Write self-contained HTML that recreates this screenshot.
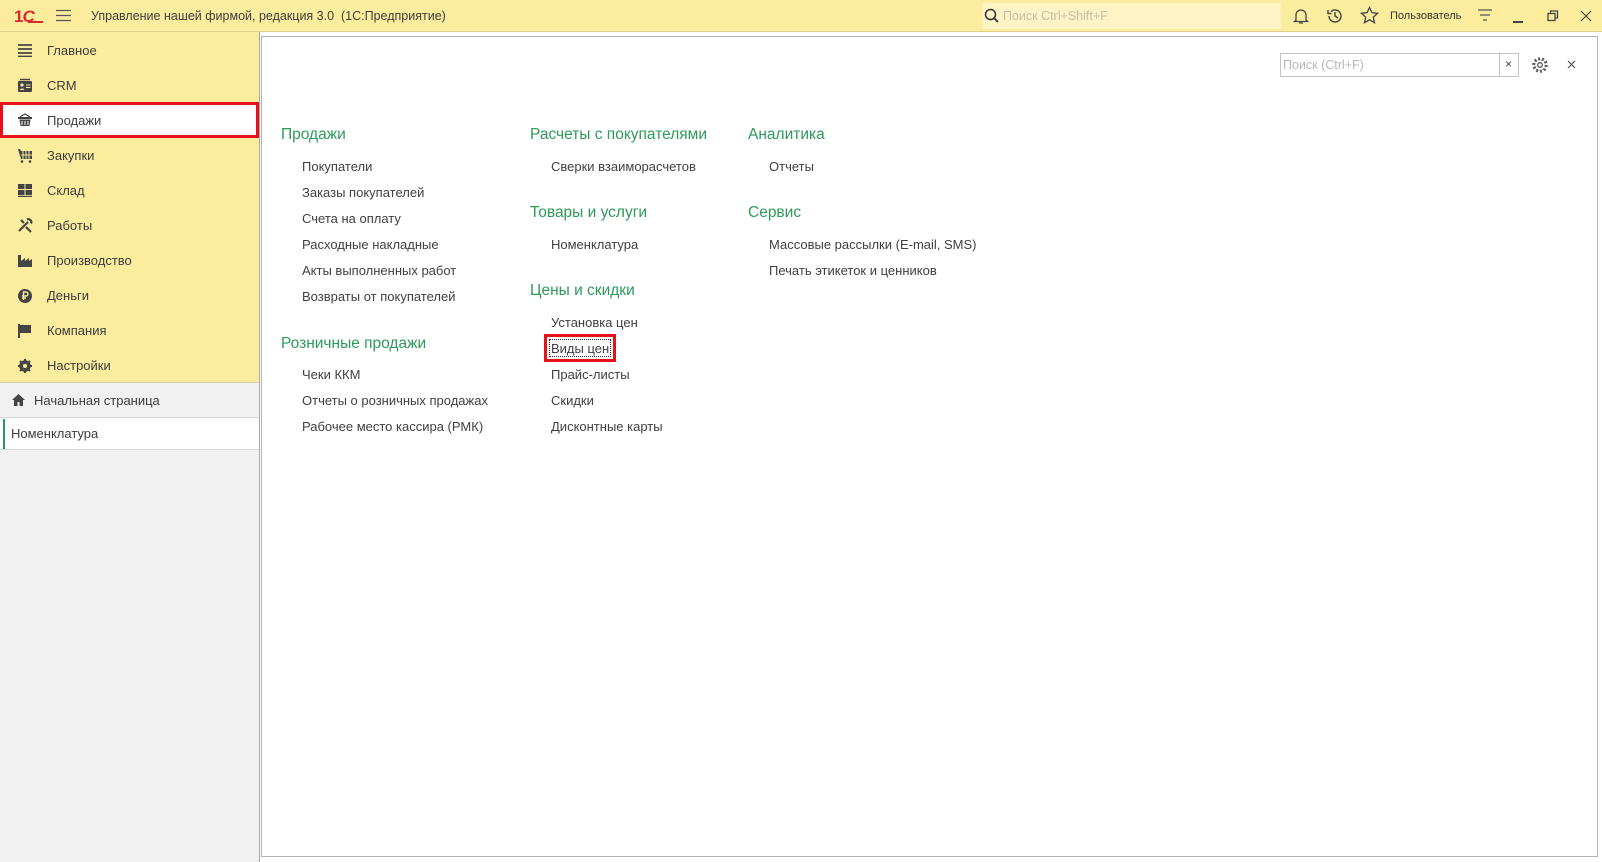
<!DOCTYPE html>
<html><head><meta charset="utf-8"><style>
*{margin:0;padding:0;box-sizing:border-box}
body{width:1602px;height:862px;overflow:hidden;background:#fff;font-family:"Liberation Sans",Arial,sans-serif;color:#4a4a4a;position:relative}
.a{position:absolute;white-space:nowrap}
#top{left:0;top:0;width:1602px;height:32px;background:#fbec9e;border-bottom:1px solid #e0d08a}
#side{left:0;top:32px;width:260px;height:830px;background:#f2f1f2;border-right:1px solid #a8a8a8}
#yel{left:0;top:32px;width:259px;height:351px;background:#fbec9e;border-bottom:1px solid #d8d0a8}
.mi{font-size:13px;color:#3c3c3c}
.ic{width:16px;height:14px;position:absolute}
#panel{left:261px;top:36px;width:1337px;height:821px;border:1px solid #b4b4b4;border-right:1px solid #b4b4b4;background:#fff}
.h{font-size:15.5px;color:#2e9a5a}
.l{font-size:13px;color:#404040}
</style></head><body>
<div class="a" id="top"></div>
<div class="a" style="left:14px;top:7px;font-size:17px;font-weight:bold;color:#d92b2b;letter-spacing:-1px">1<span style="font-style:italic">С</span></div>
<div class="a" style="left:28px;top:21px;width:15px;height:2px;background:#d92b2b"></div>
<svg class="a" style="left:56px;top:9px" width="15" height="13"><path d="M0 1.5H15M0 6.5H15M0 11.5H15" stroke="#555" stroke-width="1.3"/></svg>
<div class="a" style="left:91px;top:9px;font-size:12.5px;color:#3e3e3e">Управление нашей фирмой, редакция 3.0 &nbsp;(1С:Предприятие)</div>
<div class="a" style="left:982px;top:3px;width:299px;height:26px;background:#fdf3c4"></div>
<svg class="a" style="left:984px;top:8px" width="16" height="16"><circle cx="6.5" cy="6.5" r="5" fill="none" stroke="#333" stroke-width="1.5"/><path d="M10 10L14 14" stroke="#333" stroke-width="1.8"/></svg>
<div class="a" style="left:1003px;top:9px;font-size:12.5px;color:#c4c0a8">Поиск Ctrl+Shift+F</div>
<svg class="a" style="left:1292px;top:7px" width="18" height="18"><path d="M4 13V8a5 5 0 0 1 10 0v5l1.5 1.5h-13Z M7 16h4" fill="none" stroke="#444" stroke-width="1.3"/></svg>
<svg class="a" style="left:1326px;top:7px" width="18" height="18"><path d="M3 9a6 6 0 1 0 2-4.5M2 3v3.5h3.5M9 5v4l3 2" fill="none" stroke="#444" stroke-width="1.4"/></svg>
<svg class="a" style="left:1360px;top:6px" width="19" height="19"><path d="M9.5 1.5l2.4 5.2 5.6.6-4.2 3.8 1.2 5.6-5-2.9-5 2.9 1.2-5.6L1.5 7.3l5.6-.6Z" fill="none" stroke="#444" stroke-width="1.3"/></svg>
<div class="a" style="left:1390px;top:10px;font-size:11px;color:#333">Пользователь</div>
<svg class="a" style="left:1477px;top:8px" width="16" height="16"><path d="M1 2H15M3 7H13M6 12H10" stroke="#555" stroke-width="1.3"/></svg>
<div class="a" style="left:1513px;top:21px;width:10px;height:1.5px;background:#444"></div>
<svg class="a" style="left:1547px;top:10px" width="12" height="12"><path d="M1 3.5h7v7h-7zM3.5 3.5V1h7v7H8" fill="none" stroke="#444" stroke-width="1.3"/></svg>
<svg class="a" style="left:1580px;top:10px" width="12" height="12"><path d="M1 1L11 11M11 1L1 11" stroke="#444" stroke-width="1.2"/></svg>

<div class="a" id="side"></div>
<div class="a" id="yel"></div>
<div class="a" style="left:0;top:102px;width:259px;height:36px;background:#fff;border:3px solid #e8101a"></div>

<svg class="a" style="left:17px;top:43px" width="16" height="14"><path d="M1 2H15M1 6H15M1 10H15M1 13.5H15" stroke="#444" stroke-width="1.8"/></svg>
<div class="a mi" style="left:47px;top:43px">Главное</div>
<svg class="a" style="left:17px;top:78px" width="16" height="15"><rect x="1" y="3" width="14" height="11" rx="1" fill="#444"/><path d="M3 1.5h10" stroke="#444" stroke-width="1.5"/><circle cx="5" cy="7" r="1.6" fill="#fbec9e"/><path d="M2.8 12c0-2 4.4-2 4.4 0z" fill="#fbec9e"/><path d="M9 7h4.5M9 9.5h4.5" stroke="#fbec9e"/></svg>
<div class="a mi" style="left:47px;top:78px">CRM</div>
<svg class="a" style="left:17px;top:113px" width="16" height="14"><path d="M3 4L8 1l5 3" fill="none" stroke="#444" stroke-width="1.2"/><rect x="1" y="4" width="14" height="2" fill="#444"/><path d="M2.5 6.5h11l-1 6.5h-9z" fill="#444"/><path d="M5 8v4M8 8v4M11 8v4" stroke="#fff"/></svg>
<div class="a mi" style="left:47px;top:113px">Продажи</div>
<svg class="a" style="left:17px;top:148px" width="16" height="15"><path d="M1 1h2l1 2h11v8H4z" fill="#444"/><path d="M6 3v8M9 3v8M12 3v8M4 7h11" stroke="#fbec9e"/><circle cx="5" cy="13.5" r="1.3" fill="#444"/><circle cx="13" cy="13.5" r="1.3" fill="#444"/></svg>
<div class="a mi" style="left:47px;top:148px">Закупки</div>
<svg class="a" style="left:17px;top:183px" width="16" height="14"><rect x="1" y="1" width="6.5" height="5" fill="#444"/><rect x="8.5" y="1" width="6.5" height="5" fill="#444"/><rect x="1" y="7" width="6.5" height="5" fill="#444"/><rect x="8.5" y="7" width="6.5" height="5" fill="#444"/><rect x="1" y="12.8" width="14" height="1.2" fill="#444"/></svg>
<div class="a mi" style="left:47px;top:183px">Склад</div>
<svg class="a" style="left:17px;top:218px" width="16" height="15"><path d="M2 13L11 4M4 2l3 3M10 1.5a3 3 0 0 1 4 4M9 9l5 5" stroke="#444" stroke-width="2.2" fill="none"/></svg>
<div class="a mi" style="left:47px;top:218px">Работы</div>
<svg class="a" style="left:17px;top:253px" width="16" height="14"><path d="M1 14V2h3v6l4-3v3l4-3v3l3-2v8z" fill="#444"/></svg>
<div class="a mi" style="left:47px;top:253px">Производство</div>
<svg class="a" style="left:17px;top:288px" width="16" height="16"><circle cx="8" cy="8" r="7" fill="#444"/><path d="M6.5 12V4h2.5a2 2 0 0 1 0 4H5M5 10h4" stroke="#fbec9e" stroke-width="1.4" fill="none"/></svg>
<div class="a mi" style="left:47px;top:288px">Деньги</div>
<svg class="a" style="left:17px;top:323px" width="16" height="15"><path d="M2 1v14" stroke="#444" stroke-width="2"/><path d="M3 2h11v8H3z" fill="#444"/></svg>
<div class="a mi" style="left:47px;top:323px">Компания</div>
<svg class="a" style="left:17px;top:358px" width="16" height="16"><circle cx="8" cy="8" r="4.5" fill="none" stroke="#444" stroke-width="2.5"/><path d="M8 1v14M1 8h14M3 3l10 10M13 3L3 13" stroke="#444" stroke-width="2"/><circle cx="8" cy="8" r="2" fill="#fbec9e"/></svg>
<div class="a mi" style="left:47px;top:358px">Настройки</div>

<div class="a" style="left:0;top:417px;width:259px;height:1px;background:#d8d8d8"></div>
<svg class="a" style="left:11px;top:393px" width="15" height="14"><path d="M7.5 1L1 7h2v6h3.5V9h2v4H12V7h2z" fill="#444"/></svg>
<div class="a mi" style="left:34px;top:393px">Начальная страница</div>
<div class="a" style="left:0;top:418px;width:259px;height:32px;background:#fff;border-bottom:1px solid #d8d8d8"></div>
<div class="a" style="left:3px;top:419px;width:2px;height:30px;background:#2a9a5a"></div>
<div class="a mi" style="left:11px;top:426px">Номенклатура</div>

<div class="a" id="panel"></div>
<div class="a" style="left:1280px;top:53px;width:239px;height:24px;border:1px solid #c4c4c4"></div>
<div class="a" style="left:1499px;top:53px;width:1px;height:24px;background:#c4c4c4"></div>
<div class="a" style="left:1283px;top:58px;font-size:12.5px;color:#b8b8b8">Поиск (Ctrl+F)</div>
<div class="a" style="left:1505px;top:57px;font-size:12px;color:#444">×</div>
<svg class="a" style="left:1531px;top:56px" width="18" height="18"><circle cx="9" cy="9" r="5.5" fill="none" stroke="#555" stroke-width="1.4" stroke-dasharray="2.2 1.2"/><circle cx="9" cy="9" r="2.3" fill="none" stroke="#555" stroke-width="1.3"/><circle cx="9" cy="9" r="7" fill="none" stroke="#555" stroke-width="1.6" stroke-dasharray="2 2.4"/></svg>
<svg class="a" style="left:1567px;top:60px" width="9" height="9"><path d="M1 1L8 8M8 1L1 8" stroke="#555" stroke-width="1.2"/></svg>

<div class="a h" style="left:281px;top:126px">Продажи</div>
<div class="a l" style="left:302px;top:159px">Покупатели</div>
<div class="a l" style="left:302px;top:185px">Заказы покупателей</div>
<div class="a l" style="left:302px;top:211px">Счета на оплату</div>
<div class="a l" style="left:302px;top:237px">Расходные накладные</div>
<div class="a l" style="left:302px;top:263px">Акты выполненных работ</div>
<div class="a l" style="left:302px;top:289px">Возвраты от покупателей</div>
<div class="a h" style="left:281px;top:335px">Розничные продажи</div>
<div class="a l" style="left:302px;top:367px">Чеки ККМ</div>
<div class="a l" style="left:302px;top:393px">Отчеты о розничных продажах</div>
<div class="a l" style="left:302px;top:419px">Рабочее место кассира (РМК)</div>

<div class="a h" style="left:530px;top:126px">Расчеты с покупателями</div>
<div class="a l" style="left:551px;top:159px">Сверки взаиморасчетов</div>
<div class="a h" style="left:530px;top:204px">Товары и услуги</div>
<div class="a l" style="left:551px;top:237px">Номенклатура</div>
<div class="a h" style="left:530px;top:282px">Цены и скидки</div>
<div class="a l" style="left:551px;top:315px">Установка цен</div>
<div class="a" style="left:544px;top:334px;width:72px;height:28px;border:3px solid #e8101a"></div>
<div class="a" style="left:549px;top:339px;width:62px;height:18px;border:1px dotted #333"></div>
<div class="a l" style="left:551px;top:341px">Виды цен</div>
<div class="a l" style="left:551px;top:367px">Прайс-листы</div>
<div class="a l" style="left:551px;top:393px">Скидки</div>
<div class="a l" style="left:551px;top:419px">Дисконтные карты</div>

<div class="a h" style="left:748px;top:126px">Аналитика</div>
<div class="a l" style="left:769px;top:159px">Отчеты</div>
<div class="a h" style="left:748px;top:204px">Сервис</div>
<div class="a l" style="left:769px;top:237px">Массовые рассылки (E-mail, SMS)</div>
<div class="a l" style="left:769px;top:263px">Печать этикеток и ценников</div>
</body></html>
